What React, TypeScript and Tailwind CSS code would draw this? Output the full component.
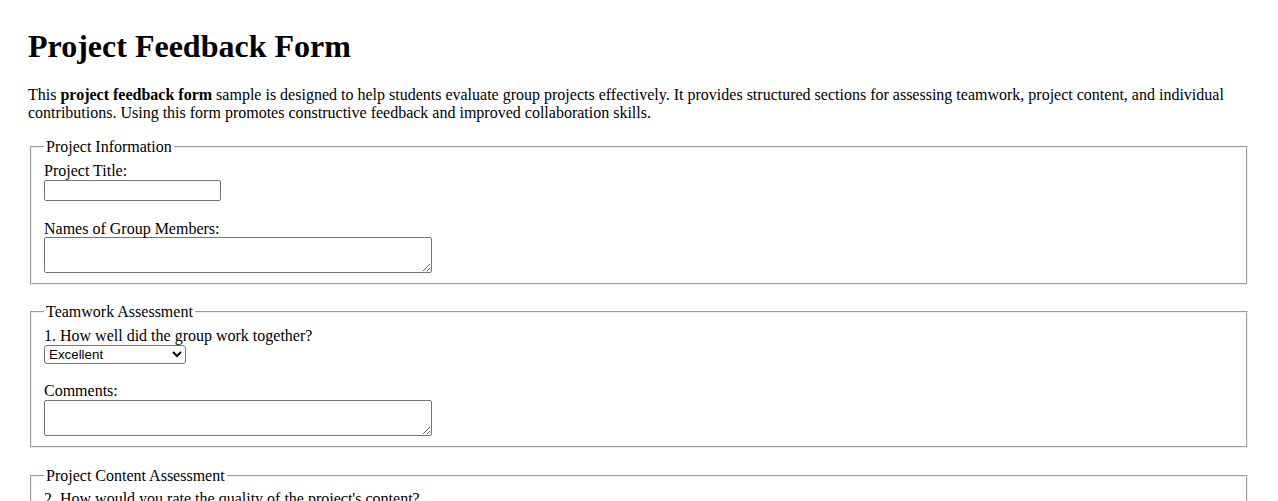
const fieldsetCls =
  "mx-[2px] border-2 border-[#f0f0f0] [border-style:groove] px-[12px] pt-[5.6px] pb-[10px] min-w-0";
const legendCls = "px-[2px] leading-[normal]";
const controlFont = "font-['Liberation_Sans',Arial,sans-serif] text-[13.333px] text-black";

function TextBox() {
  return (
    <input
      type="text"
      className={`block w-[177px] h-[21px] border border-[#767676] rounded-[2px] bg-white px-[2px] py-[1px] ${controlFont}`}
    />
  );
}

function Area({ top = "-mt-[1.5px]" }: { top?: string }) {
  return (
    <textarea
      className={`block ${top} w-[388px] h-[36px] border border-[#767676] rounded-[2px] bg-white px-[2px] py-[2px] ${controlFont}`}
    />
  );
}

function Rating() {
  return (
    <select
      defaultValue="Excellent"
      className={`block w-[142px] h-[19px] border border-[#767676] rounded-[3px] bg-white ${controlFont}`}
    >
      <option>Excellent</option>
      <option>Good</option>
      <option>Average</option>
      <option>Needs Improvement</option>
    </select>
  );
}

export default function App() {
  return (
    <div className="h-[501px] overflow-hidden bg-white text-black font-['Liberation_Serif','Times_New_Roman',serif] text-[16px] leading-[normal]">
      <div className="px-[28px] pt-[27.5px]">
        <h1 className="text-[32px] font-bold leading-[normal] mb-[21.44px]">Project Feedback Form</h1>
        <p className="mb-[16px]">
          This <b>project feedback form</b> sample is designed to help students evaluate group projects effectively. It
          provides structured sections for assessing teamwork, project content, and individual contributions. Using this
          form promotes constructive feedback and improved collaboration skills.
        </p>

        <form>
          <fieldset className={fieldsetCls}>
            <legend className={legendCls}>Project Information</legend>
            <label className="block">Project Title:</label>
            <TextBox />
            <label className="block mt-[19.6px]">Names of Group Members:</label>
            <Area />
          </fieldset>

          <div className="h-[18.4px]" />

          <fieldset className={fieldsetCls}>
            <legend className={legendCls}>Teamwork Assessment</legend>
            <label className="block">1. How well did the group work together?</label>
            <Rating />
            <label className="block mt-[18.7px]">Comments:</label>
            <Area top="mt-0" />
          </fieldset>

          <div className="h-[18.4px]" />

          <fieldset className={fieldsetCls}>
            <legend className={legendCls}>Project Content Assessment</legend>
            <label className="block">2. How would you rate the quality of the project's content?</label>
            <Rating />
            <label className="block mt-[18.7px]">Comments:</label>
            <Area top="mt-0" />
          </fieldset>

          <div className="h-[18.4px]" />

          <fieldset className={fieldsetCls}>
            <legend className={legendCls}>Individual Contributions</legend>
            <label className="block">3. Describe your own contribution to the project:</label>
            <Area />
          </fieldset>
        </form>
      </div>
    </div>
  );
}
